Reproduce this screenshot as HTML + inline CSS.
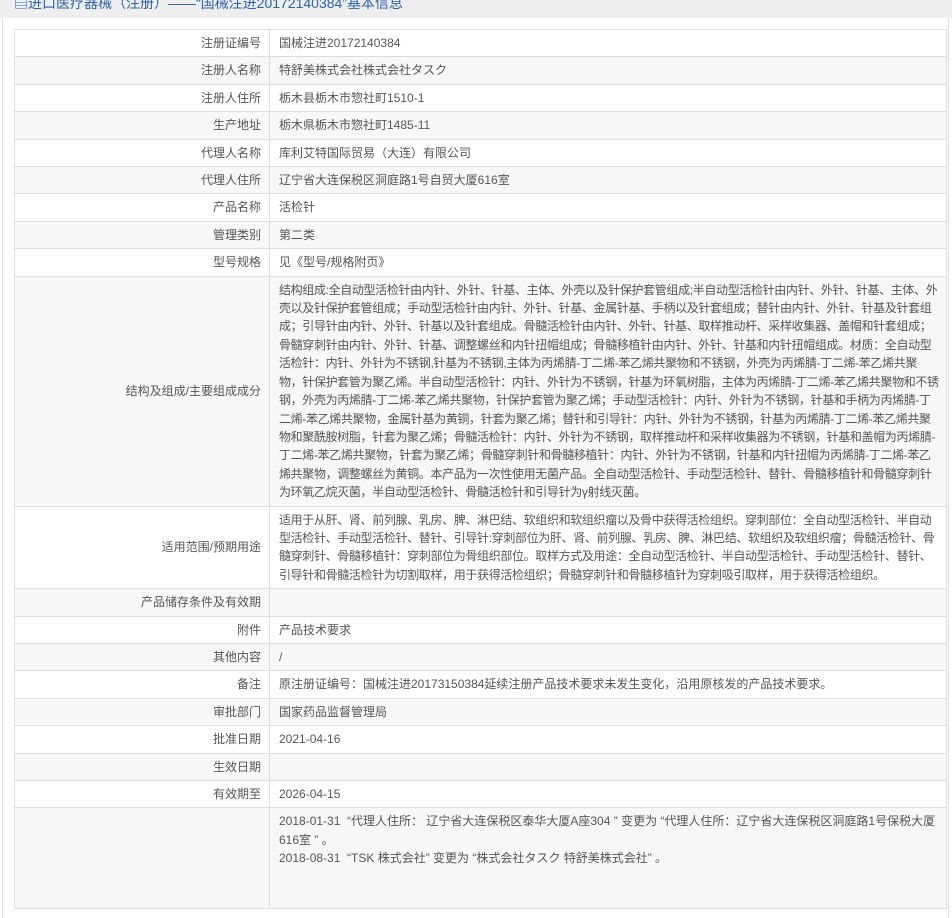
<!DOCTYPE html>
<html><head><meta charset="utf-8">
<style>
html,body{margin:0;padding:0;background:#fff;}
body{width:952px;height:865px;overflow:hidden;position:relative;font-family:"Liberation Sans","Noto Sans CJK SC",sans-serif;font-size:12px;color:#555;}
.hdr{position:absolute;left:0;top:0;width:952px;height:18px;background:#eee;overflow:hidden;}
.hdr span{position:absolute;left:14px;top:-9px;font-size:14px;line-height:24px;color:#2b62b0;white-space:nowrap;}
.frame{position:absolute;left:2px;top:18px;width:945px;height:900px;border-left:1px solid #ddd;border-right:1px solid #ddd;background:#fff;}
table{position:absolute;left:14px;top:29px;width:933px;border-collapse:collapse;table-layout:fixed;}
td{border:1px solid #ddd;padding:4px 6px 4px 9px;line-height:18.4px;vertical-align:middle;}
td.l{width:246px;text-align:right;padding-right:8px;padding-left:0;}
td.v{letter-spacing:-0.35px;}
tr:nth-child(even) td{background:#f7f7f7;}
</style></head><body>
<div class="hdr"><span>▤进口医疗器械（注册）——“国械注进20172140384”基本信息</span></div>
<div class="frame"></div>
<table>
<tr><td class="l">注册证编号</td><td>国械注进20172140384</td></tr>
<tr><td class="l">注册人名称</td><td>特舒美株式会社株式会社タスク</td></tr>
<tr><td class="l">注册人住所</td><td>栃木县栃木市惣社町1510-1</td></tr>
<tr><td class="l">生产地址</td><td>栃木県栃木市惣社町1485-11</td></tr>
<tr><td class="l">代理人名称</td><td>库利艾特国际贸易（大连）有限公司</td></tr>
<tr><td class="l">代理人住所</td><td>辽宁省大连保税区洞庭路1号自贸大厦616室</td></tr>
<tr><td class="l">产品名称</td><td>活检针</td></tr>
<tr><td class="l">管理类别</td><td>第二类</td></tr>
<tr><td class="l">型号规格</td><td>见《型号/规格附页》</td></tr>
<tr><td class="l">结构及组成/主要组成成分</td><td class="v">结构组成:全自动型活检针由内针、外针、针基、主体、外壳以及针保护套管组成;半自动型活检针由内针、外针、针基、主体、外壳以及针保护套管组成；手动型活检针由内针、外针、针基、金属针基、手柄以及针套组成；替针由内针、外针、针基及针套组成；引导针由内针、外针、针基以及针套组成。骨髓活检针由内针、外针、针基、取样推动杆、采样收集器、盖帽和针套组成；骨髓穿刺针由内针、外针、针基、调整螺丝和内针扭帽组成；骨髓移植针由内针、外针、针基和内针扭帽组成。材质：全自动型活检针：内针、外针为不锈钢,针基为不锈钢,主体为丙烯腈-丁二烯-苯乙烯共聚物和不锈钢，外壳为丙烯腈-丁二烯-苯乙烯共聚物，针保护套管为聚乙烯。半自动型活检针：内针、外针为不锈钢，针基为环氧树脂，主体为丙烯腈-丁二烯-苯乙烯共聚物和不锈钢，外壳为丙烯腈-丁二烯-苯乙烯共聚物，针保护套管为聚乙烯；手动型活检针：内针、外针为不锈钢，针基和手柄为丙烯腈-丁二烯-苯乙烯共聚物，金属针基为黄铜，针套为聚乙烯；替针和引导针：内针、外针为不锈钢，针基为丙烯腈-丁二烯-苯乙烯共聚物和聚酰胺树脂，针套为聚乙烯；骨髓活检针：内针、外针为不锈钢，取样推动杆和采样收集器为不锈钢，针基和盖帽为丙烯腈-丁二烯-苯乙烯共聚物，针套为聚乙烯；骨髓穿刺针和骨髓移植针：内针、外针为不锈钢，针基和内针扭帽为丙烯腈-丁二烯-苯乙烯共聚物，调整螺丝为黄铜。本产品为一次性使用无菌产品。全自动型活检针、手动型活检针、替针、骨髓移植针和骨髓穿刺针为环氧乙烷灭菌，半自动型活检针、骨髓活检针和引导针为γ射线灭菌。</td></tr>
<tr><td class="l">适用范围/预期用途</td><td class="v">适用于从肝、肾、前列腺、乳房、脾、淋巴结、软组织和软组织瘤以及骨中获得活检组织。穿刺部位：全自动型活检针、半自动型活检针、手动型活检针、替针、引导针:穿刺部位为肝、肾、前列腺、乳房、脾、淋巴结、软组织及软组织瘤；骨髓活检针、骨髓穿刺针、骨髓移植针：穿刺部位为骨组织部位。取样方式及用途：全自动型活检针、半自动型活检针、手动型活检针、替针、引导针和骨髓活检针为切割取样，用于获得活检组织；骨髓穿刺针和骨髓移植针为穿刺吸引取样，用于获得活检组织。</td></tr>
<tr><td class="l">产品储存条件及有效期</td><td></td></tr>
<tr><td class="l">附件</td><td>产品技术要求</td></tr>
<tr><td class="l">其他内容</td><td>/</td></tr>
<tr><td class="l">备注</td><td>原注册证编号：国械注进20173150384延续注册产品技术要求未发生变化，沿用原核发的产品技术要求。</td></tr>
<tr><td class="l">审批部门</td><td>国家药品监督管理局</td></tr>
<tr><td class="l">批准日期</td><td>2021-04-16</td></tr>
<tr><td class="l">生效日期</td><td></td></tr>
<tr><td class="l">有效期至</td><td>2026-04-15</td></tr>
<tr><td class="l"></td><td>2018-01-31 &nbsp;“代理人住所： 辽宁省大连保税区泰华大厦A座304 ” 变更为 “代理人住所：辽宁省大连保税区洞庭路1号保税大厦616室 ” 。<br>2018-08-31 &nbsp;“TSK 株式会社” 变更为 “株式会社タスク 特舒美株式会社” 。<br>&nbsp;<br>&nbsp;</td></tr>
</table>
</body></html>
